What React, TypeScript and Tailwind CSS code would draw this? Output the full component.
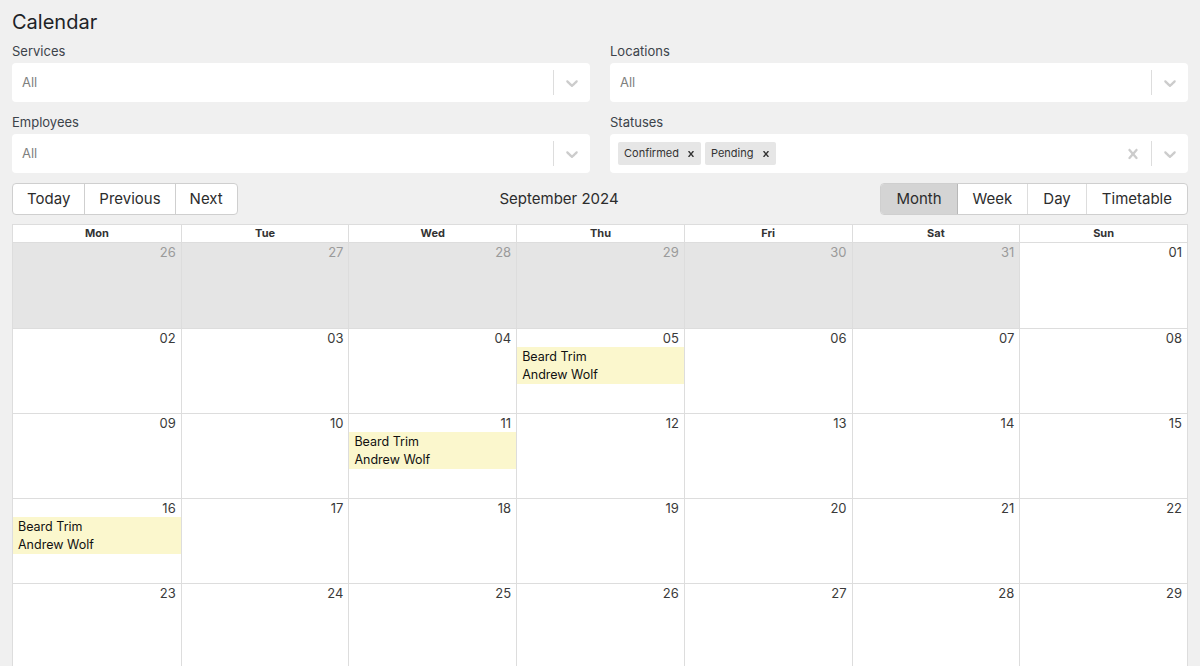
import React from "react";

const Chevron = () => (
  <svg viewBox="0 0 20 20" className="w-5 h-5 fill-[#cccccc]">
    <path d="M4.516 7.548c0.436-0.446 1.043-0.481 1.576 0l3.908 3.747 3.908-3.747c0.533-0.481 1.141-0.446 1.574 0 0.436 0.445 0.408 1.197 0 1.615-0.406 0.418-4.695 4.502-4.695 4.502-0.217 0.223-0.502 0.335-0.787 0.335s-0.57-0.112-0.789-0.335c0 0-4.287-4.084-4.695-4.502s-0.436-1.17 0-1.615z" />
  </svg>
);

const Cross = ({ className }: { className: string }) => (
  <svg viewBox="0 0 20 20" className={className}>
    <path d="M14.348 14.849c-0.469 0.469-1.229 0.469-1.697 0l-2.651-3.030-2.651 3.029c-0.469 0.469-1.229 0.469-1.697 0-0.469-0.469-0.469-1.229 0-1.697l2.758-3.15-2.759-3.152c-0.469-0.469-0.469-1.228 0-1.697s1.228-0.469 1.697 0l2.652 3.031 2.651-3.031c0.469-0.469 1.228-0.469 1.697 0s0.469 1.229 0 1.697l-2.758 3.152 2.758 3.15c0.469 0.469 0.469 1.229 0 1.698z" />
  </svg>
);

// Select field, react-select look
const Select = ({ label, tags }: { label: string; tags?: string[] }) => (
  <div className="flex-1 min-w-0">
    <div className="text-[13px] leading-4 text-[#3c434a] mb-[4px]">{label}</div>
    <div className="h-[39px] bg-white rounded-[4px] flex items-center">
      <div className="flex-1 flex items-center gap-1 pl-[8px]">
        {tags ? (
          tags.map((t) => (
            <div
              key={t}
              className="h-[23px] bg-[#e6e6e6] rounded-[2px] flex items-center text-[11px] text-[#333] pl-[6px] pr-[4px]"
            >
              {t}
              <span className="ml-[6px] w-[12px] flex items-center justify-center">
                <Cross className="w-[12px] h-[12px] fill-[#333]" />
              </span>
            </div>
          ))
        ) : (
          <span className="pl-[2px] text-[13px] text-[#808080]">All</span>
        )}
      </div>
      {tags && (
        <div className="px-2 flex items-center">
          <Cross className="w-5 h-5 fill-[#cccccc]" />
        </div>
      )}
      <div className="w-px h-[25px] bg-[#dddddd]" />
      <div className="px-2 flex items-center">
        <Chevron />
      </div>
    </div>
  </div>
);

type Event = { title: string; who: string };

const weeks: { d: string; out?: boolean; ev?: Event }[][] = [
  [
    { d: "26", out: true },
    { d: "27", out: true },
    { d: "28", out: true },
    { d: "29", out: true },
    { d: "30", out: true },
    { d: "31", out: true },
    { d: "01" },
  ],
  [
    { d: "02" },
    { d: "03" },
    { d: "04" },
    { d: "05", ev: { title: "Beard Trim", who: "Andrew Wolf" } },
    { d: "06" },
    { d: "07" },
    { d: "08" },
  ],
  [
    { d: "09" },
    { d: "10" },
    { d: "11", ev: { title: "Beard Trim", who: "Andrew Wolf" } },
    { d: "12" },
    { d: "13" },
    { d: "14" },
    { d: "15" },
  ],
  [
    { d: "16", ev: { title: "Beard Trim", who: "Andrew Wolf" } },
    { d: "17" },
    { d: "18" },
    { d: "19" },
    { d: "20" },
    { d: "21" },
    { d: "22" },
  ],
  [
    { d: "23" },
    { d: "24" },
    { d: "25" },
    { d: "26" },
    { d: "27" },
    { d: "28" },
    { d: "29" },
  ],
];

const days = ["Mon", "Tue", "Wed", "Thu", "Fri", "Sat", "Sun"];

export default function App() {
  return (
    <div className="min-h-[666px] bg-[#f0f0f0] px-3 pt-[10px] font-['Inter','Liberation_Sans',sans-serif] text-[#1d2327] overflow-hidden">
      <h1 className="text-[20px] leading-[24px] text-[#1d2327] mb-[9px]">Calendar</h1>

      {/* filters */}
      <div className="flex gap-5 mb-[12px]">
        <Select label="Services" />
        <Select label="Locations" />
      </div>
      <div className="flex gap-5 mb-[10px]">
        <Select label="Employees" />
        <Select label="Statuses" tags={["Confirmed", "Pending"]} />
      </div>

      {/* toolbar */}
      <div className="flex items-center justify-between mb-[9px]">
        <div className="flex h-[32px] border border-[#cfcfcf] rounded-[4px] bg-white text-[15px] text-[#2c2c2c] overflow-hidden">
          <button className="px-[14px]">Today</button>
          <button className="px-[14px] border-l border-[#cfcfcf]">Previous</button>
          <button className="px-[14px] border-l border-[#cfcfcf]">Next</button>
        </div>
        <div className="text-[15px] text-[#2c2c2c]">September 2024</div>
        <div className="flex h-[32px] border border-[#cfcfcf] rounded-[4px] bg-white text-[15px] text-[#2c2c2c] overflow-hidden">
          <button className="px-[15px] bg-[#d4d4d4] border-r border-[#b8b8b8]">Month</button>
          <button className="px-[15px]">Week</button>
          <button className="px-[15px] border-l border-[#dddddd]">Day</button>
          <button className="px-[15px] border-l border-[#dddddd]">Timetable</button>
        </div>
      </div>

      {/* month grid */}
      <div className="border border-[#dddddd] bg-white">
        <div className="grid grid-cols-7 h-[18px] border-b border-[#dddddd]">
          {days.map((d, i) => (
            <div
              key={d}
              className={`text-[11px] font-bold text-[#333] text-center leading-[17px] ${i > 0 ? "border-l border-[#dddddd]" : ""}`}
            >
              {d}
            </div>
          ))}
        </div>
        {weeks.map((w, wi) => (
          <div key={wi} className={`grid grid-cols-7 h-[85px] ${wi > 0 ? "border-t border-[#dddddd]" : ""}`}>
            {w.map((c, i) => (
              <div
                key={i}
                className={`flex flex-col ${i > 0 ? "border-l border-[#dddddd]" : ""} ${c.out ? "bg-[#e5e5e5]" : "bg-white"}`}
              >
                <div
                  className={`text-right text-[13px] leading-[16px] pr-[5px] pt-[1px] ${c.out ? "text-[#9a9a9a]" : "text-[#3a3a3a]"}`}
                >
                  {c.d}
                </div>
                {c.ev && (
                  <div className="mt-[1px] bg-[#fbf7cd] px-[5px] pt-[1px] text-[12.5px] leading-[18px] text-[#111]">
                    <div>{c.ev.title}</div>
                    <div>{c.ev.who}</div>
                  </div>
                )}
              </div>
            ))}
          </div>
        ))}
      </div>
    </div>
  );
}
